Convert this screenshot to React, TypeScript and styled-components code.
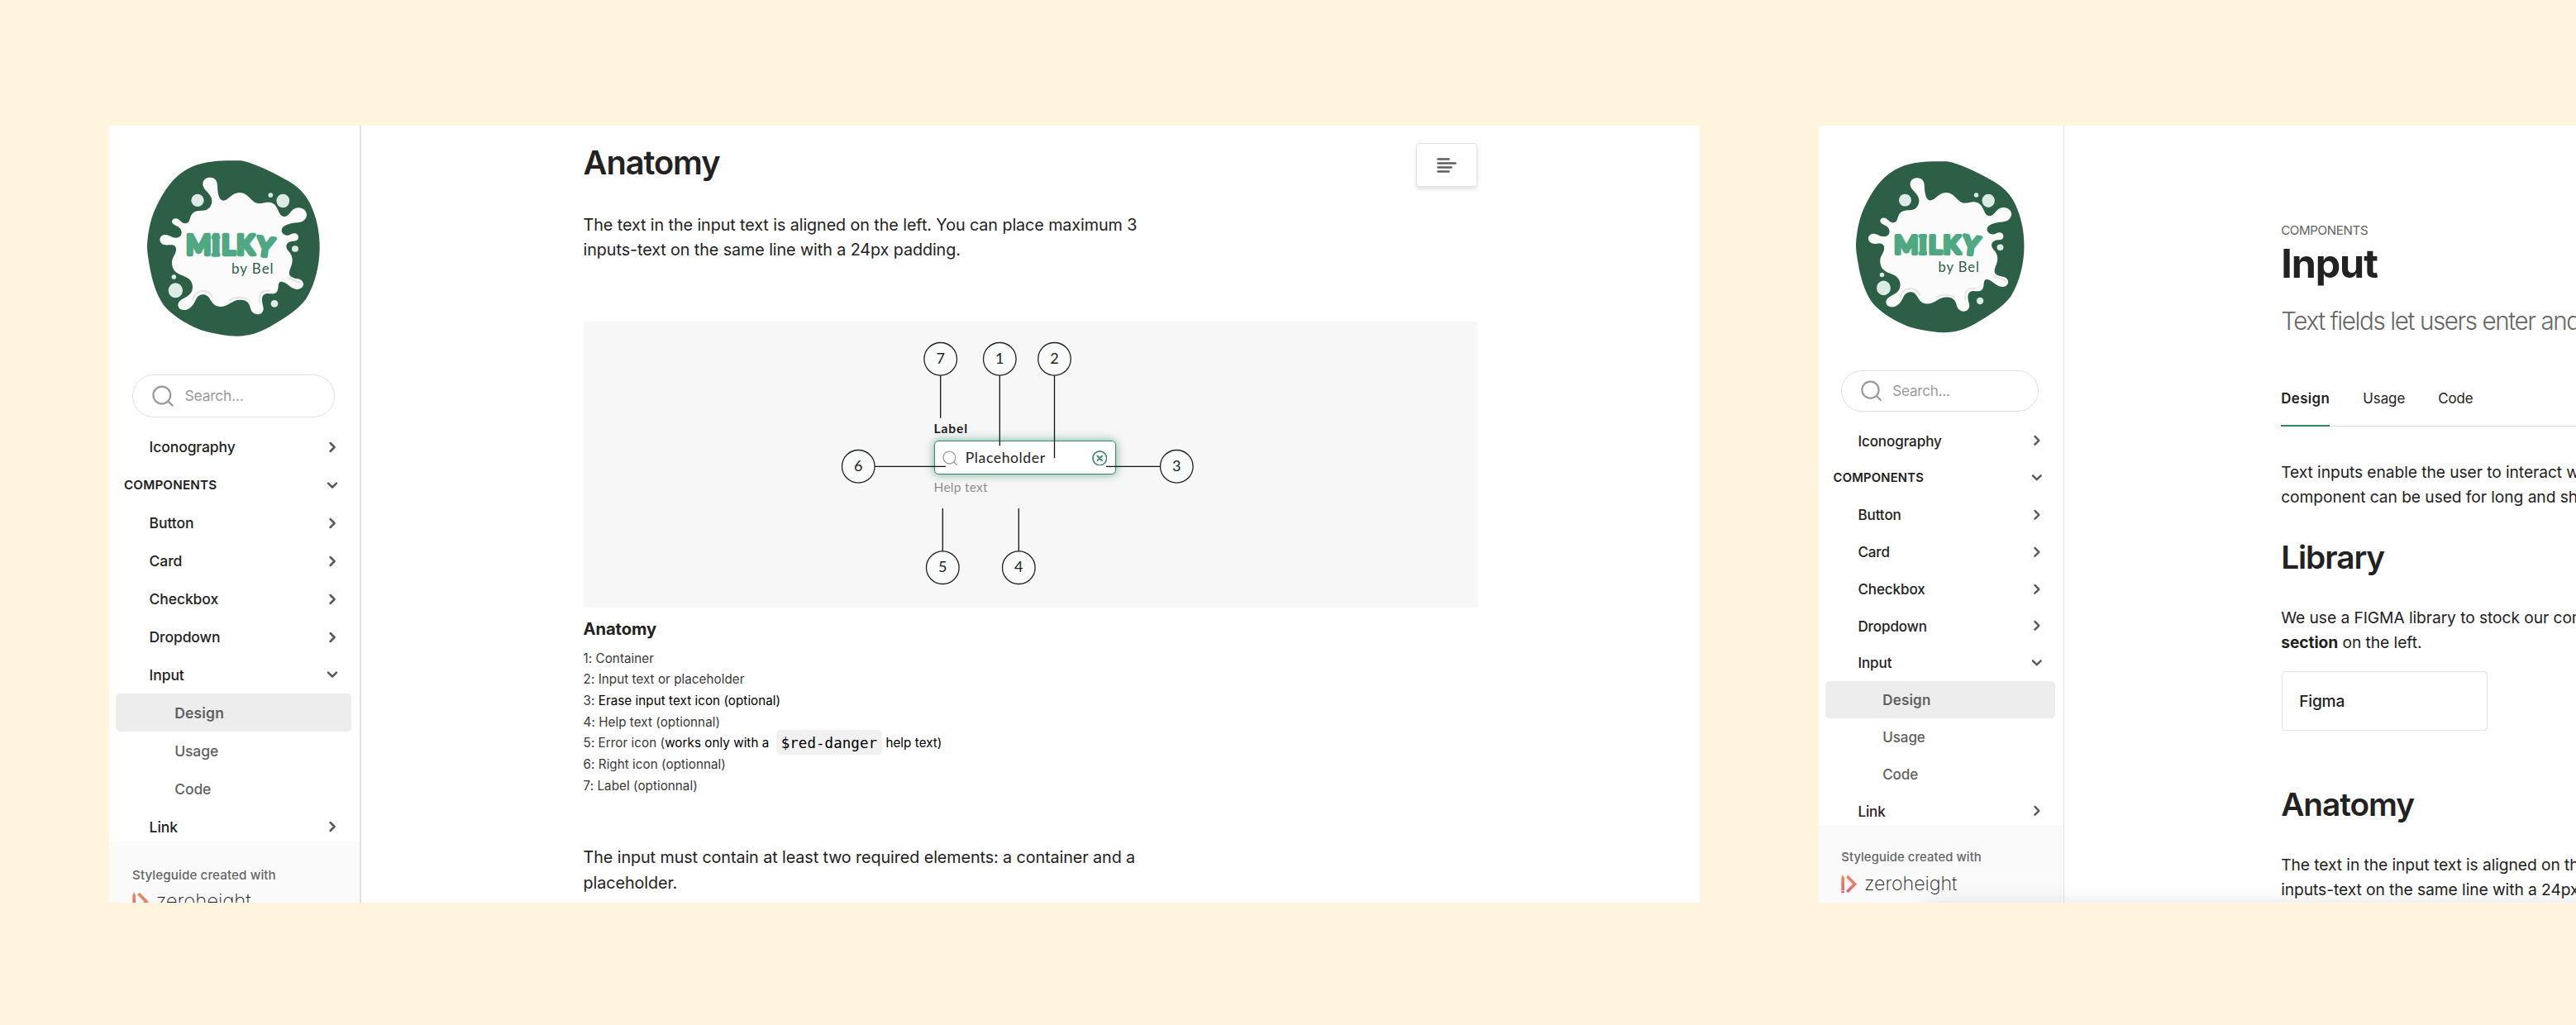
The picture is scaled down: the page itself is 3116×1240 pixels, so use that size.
import React from "react";
import styled, { createGlobalStyle, css } from "styled-components";

const GlobalStyle = createGlobalStyle`
  *, *::before, *::after { box-sizing: border-box; }
  body {
    margin: 0;
    background: #fff4de;
    color: #222;
    font-family: Inter, "Liberation Sans", sans-serif;
    -webkit-font-smoothing: antialiased;
  }
  h1, h2, h3, p, ul { margin: 0; padding: 0; }
`;

/* ---------- page shell ---------- */

const Stage = styled.div`
  display: flex;
  gap: 144px;
  width: 3116px;
  height: 1240px;
  padding: 152px 0 0 132px;
  overflow: hidden;
`;

const Screen = styled.section<{ $width: number; $faded?: boolean }>`
  position: relative;
  display: flex;
  flex: none;
  width: ${(p) => p.$width}px;
  height: 940px;
  background: #fff;
  overflow: hidden;
  ${(p) =>
    p.$faded &&
    css`
      &::after {
        content: "";
        position: absolute;
        left: 130px;
        right: 0;
        top: 100%;
        height: 40px;
        box-shadow: 0 0 26px rgba(0, 0, 0, 0.1);
      }
    `}
`;

/* ---------- sidebar ---------- */

const SidebarFrame = styled.aside<{ $width: number; $line: number }>`
  flex: none;
  width: ${(p) => p.$width}px;
  border-right: ${(p) => p.$line}px solid #e2e2e2;
  overflow: hidden;
`;

const SidebarBody = styled.div<{ $zoom: number; $top: number }>`
  display: flex;
  flex-direction: column;
  width: 303px;
  height: 990px;
  padding-top: ${(p) => p.$top}px;
  zoom: ${(p) => p.$zoom};
`;

const LogoWrap = styled.div`
  display: flex;
  flex: none;
  height: 259.3px;
  padding-left: 46px;
`;

const SearchBox = styled.div`
  display: flex;
  flex: none;
  align-items: center;
  gap: 13.6px;
  width: 245px;
  height: 51.3px;
  margin-left: 28px;
  padding-left: 23px;
  border: 1.4px solid #e0e0e0;
  border-radius: 26px;
  color: #9a9a9a;
  font-size: 17.5px;
  letter-spacing: -0.24px;
`;

const Nav = styled.nav`
  flex: none;
  height: 513.3px;
  padding: 13.4px 10px 0 8px;
  overflow: hidden;
`;

type Level = 0 | 1 | 2;

const NavRow = styled.div<{ $level: Level; $selected?: boolean }>`
  display: flex;
  align-items: center;
  justify-content: space-between;
  height: 45.93px;
  padding: 0 14.6px 0 ${(p) => [10, 40.6, 71.2][p.$level]}px;
  border-radius: 5px;
  background: ${(p) => (p.$selected ? "#ededed" : "transparent")};
  color: ${(p) => (p.$level === 2 ? "#606060" : "#222")};
  font-size: ${(p) => (p.$level === 0 ? 15.2 : 17.5)}px;
  font-weight: ${(p) => (p.$level === 0 || p.$selected ? 600 : 500)};
  letter-spacing: ${(p) => (p.$level === 0 || p.$selected ? 0.17 : -0.1)}px;
`;

const ChevronBox = styled.svg`
  display: block;
  width: 16px;
  height: 16px;
  fill: none;
  stroke: #5a5a5a;
  stroke-width: 2.5;
  stroke-linecap: round;
  stroke-linejoin: round;
`;

const SidebarFooter = styled.footer`
  flex: 1;
  padding: 30.8px 0 0 28px;
  background: #fafafa;
`;

const FooterNote = styled.div`
  color: #666;
  font-size: 15.2px;
  font-weight: 500;
  line-height: 20px;
  letter-spacing: 0.09px;
`;

const Brand = styled.div`
  display: flex;
  gap: 8px;
  margin-top: 10.6px;
  color: #1e1e1e;
  font-size: 24px;
  font-weight: 200;
  line-height: 23px;
  letter-spacing: -0.1px;
`;

/* ---------- content ---------- */

const Content = styled.main<{ $left: number; $top: number }>`
  flex: none;
  padding: ${(p) => p.$top}px 0 0 ${(p) => p.$left}px;
  white-space: nowrap;
`;

const HeadingRow = styled.div`
  display: flex;
  justify-content: space-between;
  width: 1081px;
  height: 53px;
`;

const Heading = styled.h2<{ $size: number; $gap?: number }>`
  margin-top: ${(p) => p.$gap ?? 0}px;
  font-size: ${(p) => p.$size}px;
  font-weight: 600;
  line-height: 48px;
  letter-spacing: -0.028em;
`;

const TocButton = styled.button`
  display: flex;
  align-items: center;
  justify-content: center;
  width: 74px;
  height: 53px;
  padding: 0;
  border: 1.3px solid #e2e2e2;
  border-radius: 4px;
  background: #fff;
  box-shadow: 0 3px 5px rgba(0, 0, 0, 0.12);
`;

const Paragraph = styled.p<{ $size: number; $leading: number; $gap: number }>`
  margin-top: ${(p) => p.$gap}px;
  font-size: ${(p) => p.$size}px;
  line-height: ${(p) => p.$leading}px;
  letter-spacing: -0.0045em;
`;

const Caption = styled.h3`
  margin-top: 11.6px;
  font-size: 20.2px;
  font-weight: 700;
  line-height: 30px;
  letter-spacing: -0.12px;
`;

const PartList = styled.ul`
  margin-top: 7.3px;
  list-style: none;
  color: #383838;
  font-size: 15.2px;
  line-height: 25.7px;
  letter-spacing: 0.05px;
`;

const PartItem = styled.li`
  height: 25.7px;
`;

const Ink = styled.span`
  color: #000;
`;

const Token = styled.code`
  margin: 0 0.5px 0 4.5px;
  padding: 5.7px 5.5px 4.6px;
  border-radius: 5px;
  background: #f1f1f1;
  color: #000;
  font-family: "DejaVu Sans Mono", "Liberation Mono", monospace;
  font-size: 17.5px;
  line-height: 1;
`;

/* ---------- anatomy canvas ---------- */

const Canvas = styled.div`
  position: relative;
  width: 1081px;
  height: 346px;
  margin-top: 70.6px;
  background: #f7f7f7;
  font-family: Lato, "Open Sans", sans-serif;
`;

const Field = styled.div`
  position: absolute;
  left: 424px;
  top: 118.7px;
  width: 220px;
`;

const FieldLabel = styled.div`
  height: 26px;
  font-size: 15.6px;
  font-weight: 700;
  line-height: 22px;
  letter-spacing: 0.85px;
`;

const FieldBox = styled.div`
  display: flex;
  align-items: center;
  height: 41px;
  padding: 0 9.3px 0 9px;
  border: 1.4px solid #3d8868;
  border-radius: 5px;
  background: #fff;
  box-shadow: 0 0 11px rgba(61, 150, 110, 0.75);
`;

const FieldText = styled.span`
  flex: 1;
  padding-left: 9.6px;
  font-size: 17.6px;
  letter-spacing: 0.6px;
`;

const FieldHelp = styled.div`
  margin-top: 5px;
  color: #8c8c8c;
  font-size: 15.5px;
  line-height: 20px;
  letter-spacing: 0.24px;
`;

const Callouts = styled.svg`
  position: absolute;
  inset: 0;
  width: 1081px;
  height: 346px;
  font-size: 18px;
  line {
    stroke: #111;
    stroke-width: 1.3;
  }
  circle {
    fill: #f9fbfa;
    stroke: #222;
    stroke-width: 1.3;
  }
  text {
    fill: #222;
    text-anchor: middle;
  }
`;

/* ---------- component page ---------- */

const Eyebrow = styled.div`
  color: #636363;
  font-size: 15.1px;
  line-height: 20px;
  letter-spacing: -0.36px;
`;

const Title = styled.h1`
  margin-top: 2.3px;
  font-size: 48.4px;
  font-weight: 700;
  line-height: 56px;
  letter-spacing: -1.1px;
`;

const Lead = styled.p`
  margin-top: 20.8px;
  color: #666;
  font-size: 29.6px;
  font-weight: 300;
  line-height: 40px;
  letter-spacing: -1.4px;
`;

const Tabs = styled.div`
  display: flex;
  gap: 40px;
  width: 1054px;
  height: 46.4px;
  margin-top: 62px;
  box-shadow: inset 0 -1px #dcdcdc;
`;

const Tab = styled.div<{ $active?: boolean }>`
  font-size: 16.9px;
  line-height: 24px;
  font-weight: ${(p) => (p.$active ? 600 : 400)};
  letter-spacing: ${(p) => (p.$active ? 0.38 : -0.05)}px;
  box-shadow: ${(p) => (p.$active ? "inset 0 -2px #35805f" : "none")};
`;

const LinkCard = styled.div`
  display: flex;
  align-items: center;
  width: 249px;
  height: 72px;
  margin: 20px 0 0 1px;
  padding-left: 20px;
  border: 1.3px solid #e0e0e0;
  border-radius: 4px;
  font-size: 19.2px;
  font-weight: 500;
  letter-spacing: -0.2px;
`;

/* ---------- drawings ---------- */

const MilkyLogo = () => (
  <svg width="209.3" height="213" viewBox="144 131 628 639">
    <path
      fill="#2d5f47"
      d="M430 132L484 132C530 140 590 170 640 197C690 222 725 255 745 310C765 360 771 410 770 455C769 510 755 580 720 635C690 675 640 705 590 735C550 757 515 769 470 769C420 767 370 757 335 745C280 722 230 690 203 655C175 615 160 560 152 510C147 480 144 460 144 440C146 400 155 350 170 315C190 270 215 225 250 192C300 145 360 134 430 132Z"
    />
    <path
      fill="#fbfbfb"
      d="M372 193C392 193 399 206 399 225C400 250 404 276 420 277C440 277 450 248 480 248C512 248 522 286 548 287C565 287 570 282 588 283C625 288 615 334 642 335C662 335 665 302 695 303C712 304 723 315 723 329C722 345 708 356 690 357C665 359 633 365 632 385C632 396 645 405 656 403C665 401 668 396 678 396C687 396 693 402 693 410C693 419 686 424 676 424C665 424 649 428 649 444C650 462 672 465 671 495C670 515 660 525 660 540C659 552 672 558 690 561C703 563 711 571 711 581C710 592 700 599 688 599C665 598 650 571 631 571C617 571 622 590 618 601C612 620 595 614 580 614C565 616 560 625 561 640C562 655 567 662 566 672C564 684 556 690 545 690C530 689 522 680 519 668C516 650 505 636 482 637C450 637 440 662 408 662C372 661 378 620 348 618C318 618 322 650 302 664C294 671 287 674 277 674C264 673 256 666 256 655C257 642 268 636 283 628C298 620 309 610 309 590C308 565 290 556 272 549C250 542 234 528 234 503C234 480 249 475 249 453C249 440 238 436 225 438C215 439 210 438 205 437C196 434 190 428 190 418C191 407 200 401 211 401C225 402 232 411 248 412C262 412 269 403 269 392C268 378 258 372 247 367C239 363 234 359 234 353C235 346 240 342 248 342C262 342 266 359 282 360C300 360 298 338 305 328C318 308 345 316 360 310C372 304 379 292 379 277C378 258 363 248 353 235C347 227 346 221 346 214C347 201 358 193 372 193Z"
    />
    <g fill="#dcebe5">
      <ellipse cx="327" cy="276" rx="23" ry="23" />
      <circle cx="592" cy="257" r="8.5" />
      <ellipse cx="637" cy="278" rx="23.5" ry="25" />
      <ellipse cx="681" cy="452" rx="12" ry="11.5" />
      <circle cx="606" cy="651" r="13" />
      <ellipse cx="247" cy="603" rx="26" ry="27" />
      <circle cx="241" cy="554" r="8.5" />
    </g>
    <g fill="none" stroke="#e3e5e4" strokeWidth="6">
      <path d="M308 640C320 597 362 594 384 630" />
      <path d="M441 639C465 625 488 625 511 637" />
      <path d="M552 650C547 612 560 602 592 605" />
      <path d="M655 554C670 570 690 566 703 578" />
    </g>
    <g fill="#50a883" stroke="#50a883" strokeLinejoin="round" strokeLinecap="round">
      <text
        x="286 379.500 415 469 538"
        y="474.500"
        rotate="0 0 0 0 8"
        strokeWidth="13"
        fontFamily="Lato, sans-serif"
        fontWeight="700"
        fontSize="95"
      >
        MILKY
      </text>
      <path strokeWidth="15" d="M384 410H402M384 474H402" />
    </g>
    <text
      x="450"
      y="543"
      fill="#2d5f47"
      fontFamily="Lato, sans-serif"
      fontSize="51"
      textLength="152"
      lengthAdjust="spacing"
    >
      by Bel
    </text>
  </svg>
);

const SearchIcon = ({ size, stroke, color }: { size: number; stroke: number; color: string }) => (
  <svg width={size} height={size} viewBox="0 0 26 26" fill="none" stroke={color} strokeWidth={stroke} strokeLinecap="round">
    <circle cx="11.8" cy="12" r="10.4" />
    <path d="M19.3 19.4L24.6 24.6" />
  </svg>
);

const Chevron = ({ open }: { open?: boolean }) => (
  <ChevronBox viewBox="0 0 16 16">
    <path d={open ? "M3 5.6L8 10.5L13 5.6" : "M5.6 3L10.6 8L5.6 13"} />
  </ChevronBox>
);

const ZeroheightMark = () => (
  <svg width="20.5" height="23.2" viewBox="110 686 60 68">
    <defs>
      <linearGradient id="zh" x1="0" y1="1" x2="0.3" y2="0">
        <stop offset="0" stopColor="#dd5f86" />
        <stop offset="1" stopColor="#ee8a55" />
      </linearGradient>
    </defs>
    <path fill="url(#zh)" d="M111 699L116 686L122 699V744H111ZM111 746.500H122V753H111Z" />
    <path fill="none" stroke="url(#zh)" strokeWidth="11" strokeLinejoin="miter" d="M132 692L160 720.500L132 749" />
  </svg>
);

/* ---------- data ---------- */

const navigation: { label: string; level: Level; open?: boolean; selected?: boolean }[] = [
  { label: "Iconography", level: 1 },
  { label: "COMPONENTS", level: 0, open: true },
  { label: "Button", level: 1 },
  { label: "Card", level: 1 },
  { label: "Checkbox", level: 1 },
  { label: "Dropdown", level: 1 },
  { label: "Input", level: 1, open: true },
  { label: "Design", level: 2, selected: true },
  { label: "Usage", level: 2 },
  { label: "Code", level: 2 },
  { label: "Link", level: 1 },
];

const callouts = [
  { n: 7, x: 431.7, y: 45.3, tx: 431.7, ty: 116.7 },
  { n: 1, x: 503.3, y: 45.3, tx: 503.3, ty: 150.3 },
  { n: 2, x: 569.5, y: 45.3, tx: 569.5, ty: 165.3 },
  { n: 6, x: 332.3, y: 175.3, tx: 438, ty: 175.3 },
  { n: 3, x: 717.3, y: 175.3, tx: 632, ty: 175.3 },
  { n: 5, x: 434.3, y: 297.7, tx: 434.3, ty: 226 },
  { n: 4, x: 526.3, y: 297.7, tx: 526.3, ty: 226 },
];

/* ---------- sections ---------- */

const Sidebar = ({ width, line, zoom, top }: { width: number; line: number; zoom: number; top: number }) => (
  <SidebarFrame $width={width} $line={line}>
    <SidebarBody $zoom={zoom} $top={top}>
      <LogoWrap>
        <MilkyLogo />
      </LogoWrap>
      <SearchBox>
        <SearchIcon size={26} stroke={2.2} color="#9a9a9a" />
        Search...
      </SearchBox>
      <Nav>
        {navigation.map((item) => (
          <NavRow key={item.label} $level={item.level} $selected={item.selected}>
            {item.label}
            {item.level < 2 && <Chevron open={item.open} />}
          </NavRow>
        ))}
      </Nav>
      <SidebarFooter>
        <FooterNote>Styleguide created with</FooterNote>
        <Brand>
          <ZeroheightMark />
          zeroheight
        </Brand>
      </SidebarFooter>
    </SidebarBody>
  </SidebarFrame>
);

const AnatomyCanvas = () => (
  <Canvas>
    <Field>
      <FieldLabel>Label</FieldLabel>
      <FieldBox>
        <SearchIcon size={18.5} stroke={2} color="#a0a0a0" />
        <FieldText>Placeholder</FieldText>
        <svg width="18.6" height="18.600" viewBox="0 0 18.6 18.6" fill="none" stroke="#3d8868">
          <circle cx="9.3" cy="9.3" r="8.4" strokeWidth="1.6" />
          <path d="M6.500 6.500L12.100 12.100M12.100 6.500L6.500 12.100" strokeWidth="1.9" strokeLinecap="round" />
        </svg>
      </FieldBox>
      <FieldHelp>Help text</FieldHelp>
    </Field>
    <Callouts viewBox="0 0 1081 346">
      {callouts.map((c) => (
        <g key={c.n}>
          <line x1={c.x} y1={c.y} x2={c.tx} y2={c.ty} />
          <circle cx={c.x} cy={c.y} r="19.800" />
          <text x={c.x} y={c.y + 5.7}>
            {c.n}
          </text>
        </g>
      ))}
    </Callouts>
  </Canvas>
);

const AnatomyPage = () => (
  <Content $left={268.6} $top={21}>
    <HeadingRow>
      <Heading $size={39.8}>Anatomy</Heading>
      <TocButton aria-label="Table of contents">
        <svg width="24" height="18" viewBox="0 0 24 18" stroke="#5f5f5f" strokeWidth="2.6" strokeLinecap="round">
          <path d="M1.500 1.500H14.500M1.500 6.500H22.500M1.500 11.500H17.500M1.500 16.500H14.500" />
        </svg>
      </TocButton>
    </HeadingRow>
    <Paragraph $size={19.75} $leading={30.8} $gap={30.5}>
      The text in the input text is aligned on the left. You can place maximum 3
      <br />
      inputs-text on the same line with a 24px padding.
    </Paragraph>
    <AnatomyCanvas />
    <Caption>Anatomy</Caption>
    <PartList>
      <PartItem>1: Container</PartItem>
      <PartItem>2: Input text or placeholder</PartItem>
      <PartItem>
        3: <Ink>Erase input text icon (optional)</Ink>
      </PartItem>
      <PartItem>4: Help text (optionnal)</PartItem>
      <PartItem>
        5: Error icon (<Ink>works only with a</Ink> <Token>$red-danger</Token> <Ink>help text)</Ink>
      </PartItem>
      <PartItem>6: Right icon (optionnal)</PartItem>
      <PartItem>7: Label (optionnal)</PartItem>
    </PartList>
    <Paragraph $size={19.75} $leading={30.8} $gap={58.8}>
      The input must contain at least two required elements: a container and a
      <br />
      placeholder.
    </Paragraph>
  </Content>
);

const InputPage = () => (
  <Content $left={262.2} $top={116.5}>
    <Eyebrow>COMPONENTS</Eyebrow>
    <Title>Input</Title>
    <Lead>Text fields let users enter and edit text.</Lead>
    <Tabs>
      <Tab $active>Design</Tab>
      <Tab>Usage</Tab>
      <Tab>Code</Tab>
    </Tabs>
    <Paragraph $size={19.25} $leading={30} $gap={40.3}>
      Text inputs enable the user to interact with
      <br />
      component can be used for long and short
    </Paragraph>
    <Heading $size={38.8} $gap={33.8}>
      Library
    </Heading>
    <Paragraph $size={19.25} $leading={30} $gap={33.9}>
      We use a FIGMA library to stock our components
      <br />
      <strong>section</strong> on the left.
    </Paragraph>
    <LinkCard>Figma</LinkCard>
    <Heading $size={38.8} $gap={65.3}>
      Anatomy
    </Heading>
    <Paragraph $size={19.25} $leading={30} $gap={34}>
      The text in the input text is aligned on the left.
      <br />
      inputs-text on the same line with a 24px padding.
    </Paragraph>
  </Content>
);

export default function App() {
  return (
    <>
      <GlobalStyle />
      <Stage>
        <Screen $width={1924}>
          <Sidebar width={305} line={2} zoom={1} top={42} />
          <AnatomyPage />
        </Screen>
        <Screen $width={1880} $faded>
          <Sidebar width={297} line={1} zoom={0.975} top={44.1} />
          <InputPage />
        </Screen>
      </Stage>
    </>
  );
}
